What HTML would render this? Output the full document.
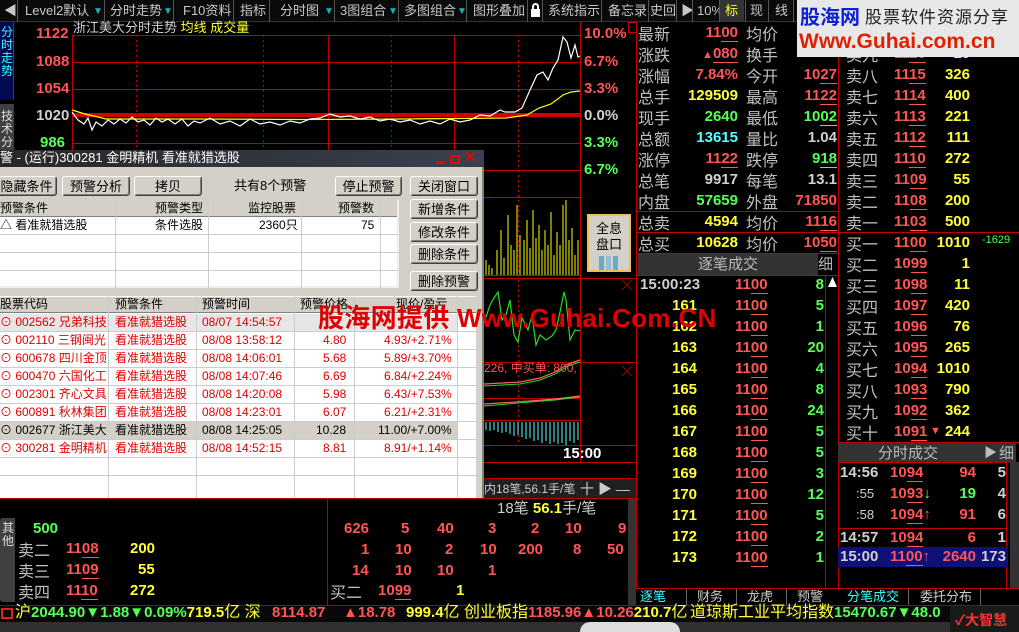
<!DOCTYPE html><html><head><meta charset="utf-8"><style>
*{margin:0;padding:0;box-sizing:border-box}
body{width:1019px;height:632px;background:#000;overflow:hidden;position:relative;font-family:"Liberation Sans","Noto Sans CJK SC",sans-serif;color:#c0c0c0}
.t{position:absolute;white-space:nowrap;line-height:20px;height:20px}
.c{font-family:"Noto Sans CJK SC",sans-serif;font-size:16px;color:#c0c0c0}
.n{font-family:"Liberation Sans",sans-serif;font-weight:bold;font-size:15px}
.r{color:#ff5555}.y{color:#ffff33}.g{color:#55ff55}.cy{color:#55ffff}.w{color:#d0d0d0}
.ra{text-align:right}
u{text-decoration:none;border-bottom:1px solid #ff5555}
.tb{font-size:13px;color:#c8c8c8;top:1px}
.sep{position:absolute;top:0;width:1px;height:22px;background:#555}
.tri{color:#19b5b5;font-size:10px}
.btn{position:absolute;background:#d4d0c8;border:1px solid #fff;border-right-color:#404040;border-bottom-color:#404040;box-shadow:inset -1px -1px #808080;font-size:13px;color:#000;text-align:center;line-height:18px;font-family:"Noto Sans CJK SC",sans-serif;border-radius:3px}
.dl{position:absolute;font-size:12px;line-height:18px;white-space:nowrap;color:#000;font-family:"Liberation Sans","Noto Sans CJK SC",sans-serif}
</style></head><body>

<div style="position:absolute;left:0;top:0;width:1019px;height:22px;background:#0a0a0a;border-bottom:1px solid #333"></div>
<div class="t tb" style="left:4px">◀</div>
<div class="sep" style="left:17px"></div>
<div class="t tb" style="left:25px">Level2默认</div><div class="t tri" style="left:93px;top:2px">▼</div><div class="sep" style="left:104px"></div>
<div class="t tb" style="left:110px">分时走势</div><div class="t tri" style="left:163px;top:2px">▼</div><div class="sep" style="left:173px"></div>
<div class="t tb" style="left:183px">F10资料</div><div class="sep" style="left:233px"></div>
<div class="t tb" style="left:240px">指标</div><div class="sep" style="left:269px"></div>
<div class="t tb" style="left:280px">分时图</div><div class="t tri" style="left:324px;top:2px">▼</div><div class="sep" style="left:334px"></div>
<div class="t tb" style="left:340px">3图组合</div><div class="t tri" style="left:388px;top:2px">▼</div><div class="sep" style="left:398px"></div>
<div class="t tb" style="left:404px">多图组合</div><div class="t tri" style="left:457px;top:2px">▼</div><div class="sep" style="left:466px"></div>
<div class="t tb" style="left:473px">图形叠加</div><div class="sep" style="left:527px"></div>
<div style="position:absolute;left:531px;top:9px;width:9px;height:8px;background:#fff"></div><div style="position:absolute;left:532px;top:3px;width:7px;height:7px;border:2px solid #fff;border-bottom:none;border-radius:4px 4px 0 0"></div>
<div class="sep" style="left:542px"></div>
<div class="t tb" style="left:548px">系统指示</div><div class="sep" style="left:601px"></div>
<div class="t tb" style="left:608px">备忘录</div><div class="sep" style="left:648px"></div>
<div class="t tb" style="left:650px">史回</div><div class="sep" style="left:676px"></div>
<div class="t tb" style="left:681px">▶</div><div class="sep" style="left:692px"></div>
<div class="t tb" style="left:697px">10%</div><div class="sep" style="left:719px"></div>
<div style="position:absolute;left:720px;top:0;width:24px;height:22px;background:#333"></div>
<div class="t tb" style="left:725px;color:#ffff33">标</div><div class="sep" style="left:745px"></div>
<div class="t tb" style="left:750px">现</div><div class="sep" style="left:768px"></div>
<div class="t tb" style="left:775px">线</div><div class="sep" style="left:793px"></div>

<div style="position:absolute;left:0;top:22px;width:14px;height:78px;background:#000a50;border-right:1px solid #444"></div>
<div class="t" style="left:1px;top:26px;width:13px;font-size:12px;line-height:13px;height:60px;color:#33ffff;white-space:normal">分时走势</div>
<div style="position:absolute;left:0;top:104px;width:14px;height:50px;background:#404040"></div>
<div class="t" style="left:1px;top:110px;width:13px;font-size:12px;line-height:13px;height:40px;color:#ddd;white-space:normal">技术分</div>

<svg style="position:absolute;left:0;top:0" width="1019" height="632">
<g stroke="#c00000" stroke-width="1" fill="none">
<line x1="72" y1="35.5" x2="580" y2="35.5"/><line x1="72" y1="62.5" x2="580" y2="62.5"/><line x1="72" y1="89.5" x2="580" y2="89.5"/>
<line x1="72" y1="143.5" x2="580" y2="143.5"/><line x1="72" y1="170.5" x2="580" y2="170.5"/><line x1="72" y1="197.5" x2="580" y2="197.5"/>
<line x1="484" y1="275.5" x2="580" y2="275.5"/><line x1="484" y1="278.5" x2="636" y2="278.5"/><line x1="484" y1="362.5" x2="636" y2="362.5"/>
<line x1="484" y1="398.5" x2="580" y2="398.5"/><line x1="484" y1="420.5" x2="580" y2="420.5"/><line x1="484" y1="445.5" x2="636" y2="445.5"/>
<line x1="484" y1="462.5" x2="636" y2="462.5"/><line x1="484" y1="478.5" x2="636" y2="478.5"/>
<line x1="72.5" y1="35" x2="72.5" y2="445"/><line x1="328.5" y1="35" x2="328.5" y2="445"/><line x1="454.5" y1="35" x2="454.5" y2="445"/><line x1="580.5" y1="22" x2="580.5" y2="462"/>
<line x1="636.5" y1="22" x2="636.5" y2="605"/>
<g stroke-dasharray="2,3"><line x1="136.5" y1="35" x2="136.5" y2="445"/><line x1="263.5" y1="35" x2="263.5" y2="445"/><line x1="391.5" y1="35" x2="391.5" y2="445"/><line x1="518.5" y1="35" x2="518.5" y2="445"/></g>
<line x1="0" y1="498.5" x2="636" y2="498.5"/><line x1="327.5" y1="498" x2="327.5" y2="605"/>
<rect x="628.5" y="22.5" width="8" height="10"/>
</g>
<rect x="72" y="113" width="508" height="4" fill="#d00000"/>
<polyline fill="none" stroke="#ffff00" stroke-width="1.2" points="72,110 85,114 98,117 106,119 200,119 300,119.5 400,119 506,118 527,115 539,108 551,104 563,95 571,92 580,91"/>
<polyline fill="none" stroke="#fff" stroke-width="1.2" points="72,112 78,120 84,124 88,118 92,130 96,122 102,126 108,120 114,124 120,119 126,123 132,117 138,122 144,120 150,125 156,118 162,122 168,119 175,124 182,119 188,126 194,121 200,123 210,118 220,124 230,121 240,126 250,119 260,124 270,122 280,125 290,121 300,123 310,119 320,118 330,114 340,117 350,116 360,119 370,117 380,121 390,119 400,122 410,120 420,124 430,121 440,124 450,119 460,122 470,120 480,115 490,116 500,110 505,112 515,112 522,108 530,90 537,75 543,72 548,80 553,68 558,60 563,37 567,42 571,58 575,45 578,57 580,56"/>
<g stroke="#ffff00" stroke-width="1">
<line x1="486" y1="275" x2="486" y2="260"/><line x1="489" y1="275" x2="489" y2="265"/><line x1="492" y1="275" x2="492" y2="268"/><line x1="497" y1="275" x2="497" y2="250"/><line x1="501" y1="275" x2="501" y2="230"/><line x1="504" y1="275" x2="504" y2="258"/><line x1="508" y1="275" x2="508" y2="215"/><line x1="511" y1="275" x2="511" y2="245"/><line x1="514" y1="275" x2="514" y2="250"/><line x1="517" y1="275" x2="517" y2="205"/><line x1="520" y1="275" x2="520" y2="235"/><line x1="524" y1="275" x2="524" y2="240"/><line x1="527" y1="275" x2="527" y2="220"/><line x1="530" y1="275" x2="530" y2="248"/><line x1="533" y1="275" x2="533" y2="210"/><line x1="536" y1="275" x2="536" y2="238"/><line x1="539" y1="275" x2="539" y2="225"/><line x1="542" y1="275" x2="542" y2="250"/><line x1="545" y1="275" x2="545" y2="230"/><line x1="548" y1="275" x2="548" y2="245"/><line x1="551" y1="275" x2="551" y2="212"/><line x1="554" y1="275" x2="554" y2="255"/><line x1="557" y1="275" x2="557" y2="232"/><line x1="560" y1="275" x2="560" y2="245"/><line x1="563" y1="275" x2="563" y2="205"/><line x1="566" y1="275" x2="566" y2="200"/><line x1="569" y1="275" x2="569" y2="240"/><line x1="572" y1="275" x2="572" y2="228"/><line x1="575" y1="275" x2="575" y2="255"/><line x1="578" y1="275" x2="578" y2="240"/>
</g>
<polyline fill="none" stroke="#22dd22" stroke-width="1.2" points="485,320 490,305 494,298 498,292 502,320 506,315 510,300 514,335 518,342 522,318 528,330 532,315 536,345 540,335 546,340 552,336 556,330 560,312 564,292 566,300 570,340 575,330 580,331"/>
<polyline fill="none" stroke="#ff6060" stroke-width="1.2" points="484,384 520,382 540,378 555,372 568,364 580,360"/>
<polyline fill="none" stroke="#22dd22" stroke-width="1" points="484,386 520,384 540,380 555,374 568,366 580,362"/>
<polyline fill="none" stroke="#ff6060" stroke-width="1.2" points="484,404 530,401 555,399 580,396"/>
<polyline fill="none" stroke="#22dd22" stroke-width="1" points="484,406 530,402 555,400 580,397"/>
<g stroke="#55ffff" stroke-width="1">
<line x1="486" y1="422" x2="486" y2="430"/><line x1="490" y1="422" x2="490" y2="431"/><line x1="494" y1="422" x2="494" y2="430"/><line x1="498" y1="422" x2="498" y2="432"/><line x1="502" y1="422" x2="502" y2="433"/><line x1="506" y1="422" x2="506" y2="432"/><line x1="510" y1="422" x2="510" y2="434"/><line x1="514" y1="422" x2="514" y2="436"/><line x1="518" y1="422" x2="518" y2="435"/><line x1="522" y1="422" x2="522" y2="437"/><line x1="526" y1="422" x2="526" y2="439"/><line x1="530" y1="422" x2="530" y2="438"/><line x1="534" y1="422" x2="534" y2="441"/><line x1="538" y1="422" x2="538" y2="440"/><line x1="542" y1="422" x2="542" y2="443"/><line x1="546" y1="422" x2="546" y2="441"/><line x1="550" y1="422" x2="550" y2="444"/><line x1="554" y1="422" x2="554" y2="442"/><line x1="558" y1="422" x2="558" y2="444"/><line x1="562" y1="422" x2="562" y2="443"/><line x1="566" y1="422" x2="566" y2="445"/><line x1="570" y1="422" x2="570" y2="441"/><line x1="574" y1="422" x2="574" y2="443"/><line x1="578" y1="422" x2="578" y2="440"/>
</g>
<g stroke="#a00000"><line x1="622" y1="280" x2="632" y2="290"/><line x1="632" y1="280" x2="622" y2="290"/><line x1="622" y1="366" x2="632" y2="376"/><line x1="632" y1="366" x2="622" y2="376"/></g>
</svg>

<div class="t" style="left:73px;top:18px;font-size:13px;color:#d0d0d0">浙江美大分时走势 <span class="y">均线 成交量</span></div>
<div class="t n r" style="left:36px;top:24px">1122</div>
<div class="t n r" style="left:36px;top:52px">1088</div>
<div class="t n r" style="left:36px;top:79px">1054</div>
<div class="t n w" style="left:36px;top:106px">1020</div>
<div class="t n g" style="left:40px;top:133px">986</div>
<div class="t n r" style="left:584px;top:24px">10.0%</div>
<div class="t n r" style="left:584px;top:52px">6.7%</div>
<div class="t n r" style="left:584px;top:79px">3.3%</div>
<div class="t n w" style="left:584px;top:106px">0.0%</div>
<div class="t n g" style="left:584px;top:133px">3.3%</div>
<div class="t n g" style="left:584px;top:160px">6.7%</div>
<div style="position:absolute;left:587px;top:214px;width:44px;height:58px;background:#d4d0c8;border:2px solid #e8c060;font-size:13px;color:#000;text-align:center;line-height:16px;padding-top:4px;font-family:'Noto Sans CJK SC',sans-serif">全息<br>盘口<div style="margin:4px auto 0;width:20px;height:14px;background:linear-gradient(90deg,#6ac 0 5px,transparent 5px 7px,#9bd 7px 12px,transparent 12px 14px,#6ac 14px 19px,transparent 19px)"></div></div>
<div class="t" style="left:484px;top:358px;font-size:12px;color:#ff5555">226, 中买单: 800,</div>
<div class="t n" style="left:563px;top:444px;color:#fff">15:00</div>
<div style="position:absolute;left:484px;top:479px;width:152px;height:19px;background:#202020"></div>
<div class="t" style="left:484px;top:479px;font-size:12px;color:#ccc">内18笔,56.1手/笔</div>
<div class="t" style="left:580px;top:479px;font-size:14px;color:#ccc">十 ▶ —</div>
<div class="t" style="left:497px;top:499px;font-size:15px;color:#ccc">18笔 <span class="y n">56.1</span>手/笔</div>
<div style="position:absolute;left:628px;top:499px;width:8px;height:106px;background:#333"></div>

<div style="position:absolute;left:0;top:518px;width:15px;height:84px;background:#404040;border-radius:3px 0 0 3px"></div>
<div class="t" style="left:2px;top:522px;width:12px;font-size:12px;line-height:13px;height:30px;color:#ddd;white-space:normal">其他</div>
<div class="t n g" style="left:33px;top:519px">500</div>
<div class="t c" style="left:18px;top:539px">卖二</div><div class="t n r" style="left:66px;top:539px">11<u>08</u></div><div class="t n y" style="left:130px;top:539px">200</div>
<div class="t c" style="left:18px;top:560px">卖三</div><div class="t n r" style="left:66px;top:560px">11<u>09</u></div><div class="t n y" style="left:138px;top:560px">55</div>
<div class="t c" style="left:18px;top:581px">卖四</div><div class="t n r" style="left:66px;top:581px">11<u>10</u></div><div class="t n y" style="left:130px;top:581px">272</div>
<div class="t n r" style="left:344px;top:519px">626</div><div class="t n r" style="left:401px;top:519px">5</div><div class="t n r" style="left:437px;top:519px">40</div><div class="t n r" style="left:488px;top:519px">3</div><div class="t n r" style="left:531px;top:519px">2</div><div class="t n r" style="left:565px;top:519px">10</div><div class="t n r" style="left:618px;top:519px">9</div>
<div class="t n r" style="left:361px;top:540px">1</div><div class="t n r" style="left:395px;top:540px">10</div><div class="t n r" style="left:445px;top:540px">2</div><div class="t n r" style="left:480px;top:540px">10</div><div class="t n r" style="left:518px;top:540px">200</div><div class="t n r" style="left:573px;top:540px">8</div><div class="t n r" style="left:607px;top:540px">50</div>
<div class="t n r" style="left:352px;top:561px">14</div><div class="t n r" style="left:395px;top:561px">10</div><div class="t n r" style="left:437px;top:561px">10</div><div class="t n r" style="left:488px;top:561px">1</div>
<div class="t c" style="left:330px;top:581px">买二</div><div class="t n r" style="left:378px;top:581px">10<u>99</u></div><div class="t n y" style="left:456px;top:581px">1</div>

<svg style="position:absolute;left:636px;top:0" width="383" height="605"><g stroke="#c00000" fill="none">
<line x1="202.5" y1="22" x2="202.5" y2="605"/><line x1="0" y1="211.5" x2="202" y2="211.5"/><line x1="0" y1="232.5" x2="383" y2="232.5"/>
<line x1="0" y1="253.5" x2="202" y2="253.5"/><line x1="0" y1="275.5" x2="202" y2="275.5"/><line x1="189.5" y1="275" x2="189.5" y2="588"/>
<line x1="202" y1="442.5" x2="383" y2="442.5"/><line x1="202" y1="462.5" x2="383" y2="462.5"/><line x1="202" y1="528.5" x2="370" y2="528.5"/>
<line x1="370.5" y1="462" x2="370.5" y2="588"/><line x1="0" y1="588.5" x2="383" y2="588.5"/>
</g></svg>
<div style="position:absolute;left:638px;top:254px;width:180px;height:21px;background:#333"></div>
<div class="t" style="left:638px;top:254px;width:180px;text-align:center;font-size:15px;color:#bbb;font-family:'Noto Sans CJK SC'">逐笔成交</div>
<div class="t" style="left:818px;top:254px;font-size:15px;color:#bbb;font-family:'Noto Sans CJK SC'">细</div>
<div style="position:absolute;left:838px;top:443px;width:178px;height:19px;background:#333"></div>
<div class="t" style="left:838px;top:443px;width:140px;text-align:center;font-size:15px;color:#bbb;font-family:'Noto Sans CJK SC'">分时成交</div>
<div class="t" style="left:984px;top:443px;font-size:13px;color:#bbb">▶</div>
<div class="t" style="left:999px;top:443px;font-size:15px;color:#bbb;font-family:'Noto Sans CJK SC'">细</div>

<div class="t c" style="left:638px;top:23px">最新</div><div class="t n r ra" style="left:680px;top:23px;width:58px">11<u>00</u></div><div class="t c" style="left:746px;top:23px">均价</div>
<div class="t c" style="left:638px;top:44px">涨跌</div><div class="t n r ra" style="left:680px;top:44px;width:58px"><span style="font-size:11px">▲</span><u>080</u></div><div class="t c" style="left:746px;top:44px">换手</div>
<div class="t c" style="left:638px;top:65px">涨幅</div><div class="t n r ra" style="left:680px;top:65px;width:58px">7.84%</div><div class="t c" style="left:746px;top:65px">今开</div><div class="t n r ra" style="left:780px;top:65px;width:57px">10<u>27</u></div>
<div class="t c" style="left:638px;top:86px">总手</div><div class="t n y ra" style="left:680px;top:86px;width:58px">129509</div><div class="t c" style="left:746px;top:86px">最高</div><div class="t n r ra" style="left:780px;top:86px;width:57px">11<u>22</u></div>
<div class="t c" style="left:638px;top:107px">现手</div><div class="t n g ra" style="left:680px;top:107px;width:58px">2640</div><div class="t c" style="left:746px;top:107px">最低</div><div class="t n g ra" style="left:780px;top:107px;width:57px">10<u style="border-color:#5f5">02</u></div>
<div class="t c" style="left:638px;top:128px">总额</div><div class="t n cy ra" style="left:680px;top:128px;width:58px">13615</div><div class="t c" style="left:746px;top:128px">量比</div><div class="t n w ra" style="left:780px;top:128px;width:57px">1.04</div>
<div class="t c" style="left:638px;top:149px">涨停</div><div class="t n r ra" style="left:680px;top:149px;width:58px">11<u>22</u></div><div class="t c" style="left:746px;top:149px">跌停</div><div class="t n g ra" style="left:780px;top:149px;width:57px">9<u style="border-color:#5f5">18</u></div>
<div class="t c" style="left:638px;top:170px">总笔</div><div class="t n w ra" style="left:680px;top:170px;width:58px">9917</div><div class="t c" style="left:746px;top:170px">每笔</div><div class="t n w ra" style="left:780px;top:170px;width:57px">13.1</div>
<div class="t c" style="left:638px;top:191px">内盘</div><div class="t n g ra" style="left:680px;top:191px;width:58px">57659</div><div class="t c" style="left:746px;top:191px">外盘</div><div class="t n r ra" style="left:780px;top:191px;width:57px">71850</div>
<div class="t c" style="left:638px;top:212px">总卖</div><div class="t n y ra" style="left:680px;top:212px;width:58px">4594</div><div class="t c" style="left:746px;top:212px">均价</div><div class="t n r ra" style="left:780px;top:212px;width:57px">11<u>16</u></div>
<div class="t c" style="left:638px;top:233px">总买</div><div class="t n y ra" style="left:680px;top:233px;width:58px">10628</div><div class="t c" style="left:746px;top:233px">均价</div><div class="t n r ra" style="left:780px;top:233px;width:57px">10<u>50</u></div>

<div class="t n w" style="left:640px;top:275px">15:00:23</div><div class="t n r" style="left:735px;top:275px">11<u>00</u></div><div class="t n g ra" style="left:790px;top:275px;width:34px">8</div>
<div style="position:absolute;left:828px;top:277px;width:9px;height:10px;background:#fff;clip-path:polygon(50% 0,100% 100%,0 100%)"></div>
<div class="t n y" style="left:672px;top:296px">161</div><div class="t n r" style="left:735px;top:296px">11<u>00</u></div><div class="t n g ra" style="left:790px;top:296px;width:34px">5</div>
<div class="t n y" style="left:672px;top:317px">162</div><div class="t n r" style="left:735px;top:317px">11<u>00</u></div><div class="t n g ra" style="left:790px;top:317px;width:34px">1</div>
<div class="t n y" style="left:672px;top:338px">163</div><div class="t n r" style="left:735px;top:338px">11<u>00</u></div><div class="t n g ra" style="left:790px;top:338px;width:34px">20</div>
<div class="t n y" style="left:672px;top:359px">164</div><div class="t n r" style="left:735px;top:359px">11<u>00</u></div><div class="t n g ra" style="left:790px;top:359px;width:34px">4</div>
<div class="t n y" style="left:672px;top:380px">165</div><div class="t n r" style="left:735px;top:380px">11<u>00</u></div><div class="t n g ra" style="left:790px;top:380px;width:34px">8</div>
<div class="t n y" style="left:672px;top:401px">166</div><div class="t n r" style="left:735px;top:401px">11<u>00</u></div><div class="t n g ra" style="left:790px;top:401px;width:34px">24</div>
<div class="t n y" style="left:672px;top:422px">167</div><div class="t n r" style="left:735px;top:422px">11<u>00</u></div><div class="t n g ra" style="left:790px;top:422px;width:34px">5</div>
<div class="t n y" style="left:672px;top:443px">168</div><div class="t n r" style="left:735px;top:443px">11<u>00</u></div><div class="t n g ra" style="left:790px;top:443px;width:34px">5</div>
<div class="t n y" style="left:672px;top:464px">169</div><div class="t n r" style="left:735px;top:464px">11<u>00</u></div><div class="t n g ra" style="left:790px;top:464px;width:34px">3</div>
<div class="t n y" style="left:672px;top:485px">170</div><div class="t n r" style="left:735px;top:485px">11<u>00</u></div><div class="t n g ra" style="left:790px;top:485px;width:34px">12</div>
<div class="t n y" style="left:672px;top:506px">171</div><div class="t n r" style="left:735px;top:506px">11<u>00</u></div><div class="t n g ra" style="left:790px;top:506px;width:34px">5</div>
<div class="t n y" style="left:672px;top:527px">172</div><div class="t n r" style="left:735px;top:527px">11<u>00</u></div><div class="t n g ra" style="left:790px;top:527px;width:34px">2</div>
<div class="t n y" style="left:672px;top:548px">173</div><div class="t n r" style="left:735px;top:548px">11<u>00</u></div><div class="t n g ra" style="left:790px;top:548px;width:34px">1</div>

<div class="t c" style="left:846px;top:44px">卖九</div><div class="t n r" style="left:894px;top:44px">11<u>16</u></div><div class="t n y ra" style="left:930px;top:44px;width:40px">10</div>
<div class="t c" style="left:846px;top:65px">卖八</div><div class="t n r" style="left:894px;top:65px">11<u>15</u></div><div class="t n y ra" style="left:930px;top:65px;width:40px">326</div>
<div class="t c" style="left:846px;top:86px">卖七</div><div class="t n r" style="left:894px;top:86px">11<u>14</u></div><div class="t n y ra" style="left:930px;top:86px;width:40px">400</div>
<div class="t c" style="left:846px;top:107px">卖六</div><div class="t n r" style="left:894px;top:107px">11<u>13</u></div><div class="t n y ra" style="left:930px;top:107px;width:40px">221</div>
<div class="t c" style="left:846px;top:128px">卖五</div><div class="t n r" style="left:894px;top:128px">11<u>12</u></div><div class="t n y ra" style="left:930px;top:128px;width:40px">111</div>
<div class="t c" style="left:846px;top:149px">卖四</div><div class="t n r" style="left:894px;top:149px">11<u>10</u></div><div class="t n y ra" style="left:930px;top:149px;width:40px">272</div>
<div class="t c" style="left:846px;top:170px">卖三</div><div class="t n r" style="left:894px;top:170px">11<u>09</u></div><div class="t n y ra" style="left:930px;top:170px;width:40px">55</div>
<div class="t c" style="left:846px;top:191px">卖二</div><div class="t n r" style="left:894px;top:191px">11<u>08</u></div><div class="t n y ra" style="left:930px;top:191px;width:40px">200</div>
<div class="t c" style="left:846px;top:212px">卖一</div><div class="t n r" style="left:894px;top:212px">11<u>03</u></div><div class="t n y ra" style="left:930px;top:212px;width:40px">500</div>
<div class="t c" style="left:846px;top:233px">买一</div><div class="t n r" style="left:894px;top:233px">11<u>00</u></div><div class="t n y ra" style="left:930px;top:233px;width:40px">1010</div><div class="t g" style="left:982px;top:230px;font-size:11px">-1629</div>
<div class="t c" style="left:846px;top:254px">买二</div><div class="t n r" style="left:894px;top:254px">10<u>99</u></div><div class="t n y ra" style="left:930px;top:254px;width:40px">1</div>
<div class="t c" style="left:846px;top:275px">买三</div><div class="t n r" style="left:894px;top:275px">10<u>98</u></div><div class="t n y ra" style="left:930px;top:275px;width:40px">11</div>
<div class="t c" style="left:846px;top:296px">买四</div><div class="t n r" style="left:894px;top:296px">10<u>97</u></div><div class="t n y ra" style="left:930px;top:296px;width:40px">420</div>
<div class="t c" style="left:846px;top:317px">买五</div><div class="t n r" style="left:894px;top:317px">10<u>96</u></div><div class="t n y ra" style="left:930px;top:317px;width:40px">76</div>
<div class="t c" style="left:846px;top:338px">买六</div><div class="t n r" style="left:894px;top:338px">10<u>95</u></div><div class="t n y ra" style="left:930px;top:338px;width:40px">265</div>
<div class="t c" style="left:846px;top:359px">买七</div><div class="t n r" style="left:894px;top:359px">10<u>94</u></div><div class="t n y ra" style="left:930px;top:359px;width:40px">1010</div>
<div class="t c" style="left:846px;top:380px">买八</div><div class="t n r" style="left:894px;top:380px">10<u>93</u></div><div class="t n y ra" style="left:930px;top:380px;width:40px">790</div>
<div class="t c" style="left:846px;top:401px">买九</div><div class="t n r" style="left:894px;top:401px">10<u>92</u></div><div class="t n y ra" style="left:930px;top:401px;width:40px">362</div>
<div class="t c" style="left:846px;top:422px">买十</div><div class="t n r" style="left:894px;top:422px">10<u>91</u></div><div class="t r" style="left:930px;top:421px;font-size:11px">▼</div><div class="t n y ra" style="left:930px;top:422px;width:40px">244</div>

<div class="t n w" style="left:840px;top:463px">14:56</div><div class="t n r" style="left:890px;top:463px">10<u>94</u></div><div class="t n r ra" style="left:940px;top:463px;width:36px">94</div><div class="t n w ra" style="left:990px;top:463px;width:16px">5</div>
<div class="t w" style="left:856px;top:484px;font-size:13px">:55</div><div class="t n r" style="left:890px;top:484px">10<u>93</u><span class="g">↓</span></div><div class="t n g ra" style="left:940px;top:484px;width:36px">19</div><div class="t n w ra" style="left:990px;top:484px;width:16px">4</div>
<div class="t w" style="left:856px;top:505px;font-size:13px">:58</div><div class="t n r" style="left:890px;top:505px">10<u>94</u>↑</div><div class="t n r ra" style="left:940px;top:505px;width:36px">91</div><div class="t n w ra" style="left:990px;top:505px;width:16px">6</div>
<div class="t n w" style="left:840px;top:528px">14:57</div><div class="t n r" style="left:890px;top:528px">10<u>94</u></div><div class="t n r ra" style="left:940px;top:528px;width:36px">6</div><div class="t n w ra" style="left:990px;top:528px;width:16px">1</div>
<div style="position:absolute;left:838px;top:547px;width:170px;height:20px;background:#10107a"></div>
<div class="t n w" style="left:840px;top:547px">15:00</div><div class="t n r" style="left:890px;top:547px">11<u>00</u>↑</div><div class="t n r ra" style="left:935px;top:547px;width:41px">2640</div><div class="t n w ra" style="left:980px;top:547px;width:26px">173</div>
<div style="position:absolute;left:1010px;top:462px;width:9px;height:126px;background:#333"></div>

<div style="position:absolute;left:636px;top:589px;width:383px;height:16px;background:#000"></div>
<div class="t" style="left:640px;top:587px;font-size:13px;color:#33ffff">逐笔</div>
<div class="t" style="left:697px;top:587px;font-size:13px;color:#ccc">财务</div>
<div class="t" style="left:747px;top:587px;font-size:13px;color:#ccc">龙虎</div>
<div class="t" style="left:797px;top:587px;font-size:13px;color:#ccc">预警</div>
<div class="t" style="left:847px;top:587px;font-size:13px;color:#33ffff">分笔成交</div>
<div class="t" style="left:920px;top:587px;font-size:13px;color:#ccc">委托分布</div>
<div style="position:absolute;left:686px;top:589px;width:1px;height:16px;background:#666"></div><div style="position:absolute;left:736px;top:589px;width:1px;height:16px;background:#666"></div><div style="position:absolute;left:786px;top:589px;width:1px;height:16px;background:#666"></div><div style="position:absolute;left:908px;top:589px;width:1px;height:16px;background:#666"></div><div style="position:absolute;left:980px;top:589px;width:1px;height:16px;background:#666"></div>

<div style="position:absolute;left:0;top:605px;width:1019px;height:17px;background:#080808;border-top:1px solid #333"></div>
<div style="position:absolute;left:1px;top:608px;width:12px;height:11px;border:2px solid #e02020"></div>
<div class="t" style="left:15px;top:603px;font-size:16px;line-height:20px"><span class="y">沪</span><span class="g n">2044.90▼1.88▼0.09%</span><span class="y n">719.5</span><span class="y">亿 深</span></div>
<div class="t n r" style="left:272px;top:603px">8114.87</div>
<div class="t n r" style="left:343px;top:603px">▲18.78</div>
<div class="t" style="left:406px;top:603px;font-size:16px"><span class="y n">999.4</span><span class="y">亿 创业板指</span><span class="r n">1185.96▲10.26</span><span class="y n">210.7</span><span class="y">亿</span></div>
<div class="t" style="left:690px;top:603px;font-size:16px"><span class="y">道琼斯工业平均指数</span><span class="g n">15470.67▼48.0</span></div>
<div style="position:absolute;left:0;top:622px;width:1019px;height:10px;background:#303030"></div>
<div style="position:absolute;left:580px;top:622px;width:100px;height:10px;background:#ddd;border-radius:10px 10px 0 0"></div>
<div style="position:absolute;left:950px;top:606px;width:69px;height:26px;background:#1a1a1a"></div>
<div class="t" style="left:955px;top:610px;font-size:14px;font-weight:bold;color:#ff3030">✓大智慧</div>

<div style="position:absolute;left:797px;top:0;width:222px;height:57px;background:#e8e8e8"></div>
<div class="t" style="left:800px;top:6px;font-size:20px;font-weight:bold;color:#1020d0;height:24px;line-height:24px">股海网</div>
<div class="t" style="left:865px;top:8px;font-size:17px;color:#222;letter-spacing:1px">股票软件资源分享</div>
<div class="t" style="left:799px;top:30px;font-size:21px;font-weight:bold;color:#e02000;height:24px;line-height:24px">Www.Guhai.com.cn</div>

<div style="position:absolute;left:0;top:150px;width:484px;height:348px;background:#d4d0c8;border-right:2px solid #808080"></div>
<div style="position:absolute;left:0;top:150px;width:484px;height:17px;background:linear-gradient(90deg,#282828,#3a4050)"></div>
<div class="t" style="left:0;top:148px;font-size:13px;color:#fff">警 - (运行)300281 金明精机 看准就猎选股</div>
<div style="position:absolute;left:436px;top:161px;width:9px;height:3px;background:#e00"></div>
<div style="position:absolute;left:450px;top:155px;width:10px;height:9px;border:2px solid #e00"></div>
<div class="t" style="left:464px;top:148px;font-size:15px;color:#e00;font-weight:bold">✕</div>

<div class="btn" style="left:-4px;top:176px;width:61px;height:20px">隐藏条件</div>
<div class="btn" style="left:62px;top:176px;width:68px;height:20px">预警分析</div>
<div class="btn" style="left:134px;top:176px;width:68px;height:20px">拷贝</div>
<div class="dl" style="left:234px;top:177px;font-size:13px">共有8个预警</div>
<div class="btn" style="left:335px;top:176px;width:67px;height:20px">停止预警</div>
<div class="btn" style="left:410px;top:176px;width:68px;height:20px">关闭窗口</div>
<div class="btn" style="left:410px;top:199px;width:68px;height:20px">新增条件</div>
<div class="btn" style="left:410px;top:222px;width:68px;height:20px">修改条件</div>
<div class="btn" style="left:410px;top:244px;width:68px;height:20px">删除条件</div>
<div class="btn" style="left:410px;top:271px;width:68px;height:20px">删除预警</div>

<div style="position:absolute;left:0;top:200px;width:399px;height:88px;background:#fff;border-bottom:2px solid #eee;border-right:2px solid #eee"></div>
<div style="position:absolute;left:0;top:200px;width:397px;height:17px;background:#d4d0c8;border-bottom:1px solid #808080"></div>
<svg style="position:absolute;left:0;top:200px" width="399" height="88"><g stroke="#ccc"><line x1="115.5" y1="0" x2="115.5" y2="88"/><line x1="208.5" y1="0" x2="208.5" y2="88"/><line x1="301.5" y1="0" x2="301.5" y2="88"/><line x1="380.5" y1="0" x2="380.5" y2="88"/><line x1="0" y1="34.5" x2="399" y2="34.5"/><line x1="0" y1="52.5" x2="399" y2="52.5"/><line x1="0" y1="70.5" x2="399" y2="70.5"/></g></svg>
<div class="dl" style="left:0;top:199px">预警条件</div><div class="dl" style="left:155px;top:199px">预警类型</div><div class="dl" style="left:248px;top:199px">监控股票</div><div class="dl" style="left:338px;top:199px">预警数</div>
<div class="dl" style="left:0;top:216px">△ 看准就猎选股</div><div class="dl" style="left:155px;top:216px">条件选股</div><div class="dl" style="left:259px;top:216px">2360只</div><div class="dl" style="left:361px;top:216px">75</div>

<div style="position:absolute;left:0;top:296px;width:476px;height:202px;background:#fff"></div>
<div style="position:absolute;left:0;top:296px;width:476px;height:17px;background:#d4d0c8;border-bottom:1px solid #808080;border-top:1px solid #fff"></div>
<div style="position:absolute;left:0;top:314px;width:457px;height:17px;background:#e6e6e6"></div>
<div style="position:absolute;left:0;top:422px;width:457px;height:17px;background:#d4d0c8"></div>
<svg style="position:absolute;left:0;top:296px" width="476" height="202"><g stroke="#ccc"><line x1="108.5" y1="0" x2="108.5" y2="202"/><line x1="196.5" y1="0" x2="196.5" y2="202"/><line x1="294.5" y1="0" x2="294.5" y2="202"/><line x1="354.5" y1="0" x2="354.5" y2="202"/><line x1="457.5" y1="0" x2="457.5" y2="202"/>
<line x1="0" y1="35.5" x2="476" y2="35.5"/><line x1="0" y1="53.5" x2="476" y2="53.5"/><line x1="0" y1="71.5" x2="476" y2="71.5"/><line x1="0" y1="89.5" x2="476" y2="89.5"/><line x1="0" y1="107.5" x2="476" y2="107.5"/><line x1="0" y1="125.5" x2="476" y2="125.5"/><line x1="0" y1="143.5" x2="476" y2="143.5"/><line x1="0" y1="161.5" x2="476" y2="161.5"/><line x1="0" y1="179.5" x2="476" y2="179.5"/></g></svg>
<div class="dl" style="left:0;top:295px">股票代码</div><div class="dl" style="left:115px;top:295px">预警条件</div><div class="dl" style="left:202px;top:295px">预警时间</div><div class="dl" style="left:300px;top:295px">预警价格</div><div class="dl" style="left:396px;top:295px">现价/盈亏</div>

<div class="dl" style="left:0;top:313px;color:#e00000">⊙ 002562 兄弟科技</div><div class="dl" style="left:115px;top:313px;color:#e00000">看准就猎选股</div><div class="dl" style="left:202px;top:313px;color:#e00000">08/07 14:54:57</div>
<div class="dl" style="left:0;top:331px;color:#e00000">⊙ 002110 三钢闽光</div><div class="dl" style="left:115px;top:331px;color:#e00000">看准就猎选股</div><div class="dl" style="left:202px;top:331px;color:#e00000">08/08 13:58:12</div><div class="dl" style="left:323px;top:331px;color:#e00000">4.80</div><div class="dl" style="left:384px;top:331px;color:#e00000">4.93/+2.71%</div>
<div class="dl" style="left:0;top:349px;color:#e00000">⊙ 600678 四川金顶</div><div class="dl" style="left:115px;top:349px;color:#e00000">看准就猎选股</div><div class="dl" style="left:202px;top:349px;color:#e00000">08/08 14:06:01</div><div class="dl" style="left:323px;top:349px;color:#e00000">5.68</div><div class="dl" style="left:384px;top:349px;color:#e00000">5.89/+3.70%</div>
<div class="dl" style="left:0;top:367px;color:#e00000">⊙ 600470 六国化工</div><div class="dl" style="left:115px;top:367px;color:#e00000">看准就猎选股</div><div class="dl" style="left:202px;top:367px;color:#e00000">08/08 14:07:46</div><div class="dl" style="left:323px;top:367px;color:#e00000">6.69</div><div class="dl" style="left:384px;top:367px;color:#e00000">6.84/+2.24%</div>
<div class="dl" style="left:0;top:385px;color:#e00000">⊙ 002301 齐心文具</div><div class="dl" style="left:115px;top:385px;color:#e00000">看准就猎选股</div><div class="dl" style="left:202px;top:385px;color:#e00000">08/08 14:20:08</div><div class="dl" style="left:323px;top:385px;color:#e00000">5.98</div><div class="dl" style="left:384px;top:385px;color:#e00000">6.43/+7.53%</div>
<div class="dl" style="left:0;top:403px;color:#e00000">⊙ 600891 秋林集团</div><div class="dl" style="left:115px;top:403px;color:#e00000">看准就猎选股</div><div class="dl" style="left:202px;top:403px;color:#e00000">08/08 14:23:01</div><div class="dl" style="left:323px;top:403px;color:#e00000">6.07</div><div class="dl" style="left:384px;top:403px;color:#e00000">6.21/+2.31%</div>
<div class="dl" style="left:0;top:421px">⊙ 002677 浙江美大</div><div class="dl" style="left:115px;top:421px">看准就猎选股</div><div class="dl" style="left:202px;top:421px">08/08 14:25:05</div><div class="dl" style="left:316px;top:421px">10.28</div><div class="dl" style="left:378px;top:421px">11.00/+7.00%</div>
<div class="dl" style="left:0;top:439px;color:#e00000">⊙ 300281 金明精机</div><div class="dl" style="left:115px;top:439px;color:#e00000">看准就猎选股</div><div class="dl" style="left:202px;top:439px;color:#e00000">08/08 14:52:15</div><div class="dl" style="left:323px;top:439px;color:#e00000">8.81</div><div class="dl" style="left:384px;top:439px;color:#e00000">8.91/+1.14%</div>

<div class="t" style="left:318px;top:303px;height:30px;line-height:30px;font-size:26px;font-weight:bold;color:#e00000;letter-spacing:0.3px;font-family:'Liberation Sans','Noto Sans CJK SC',sans-serif">股海网提供 Www.Guhai.Com.CN</div>
</body></html>
